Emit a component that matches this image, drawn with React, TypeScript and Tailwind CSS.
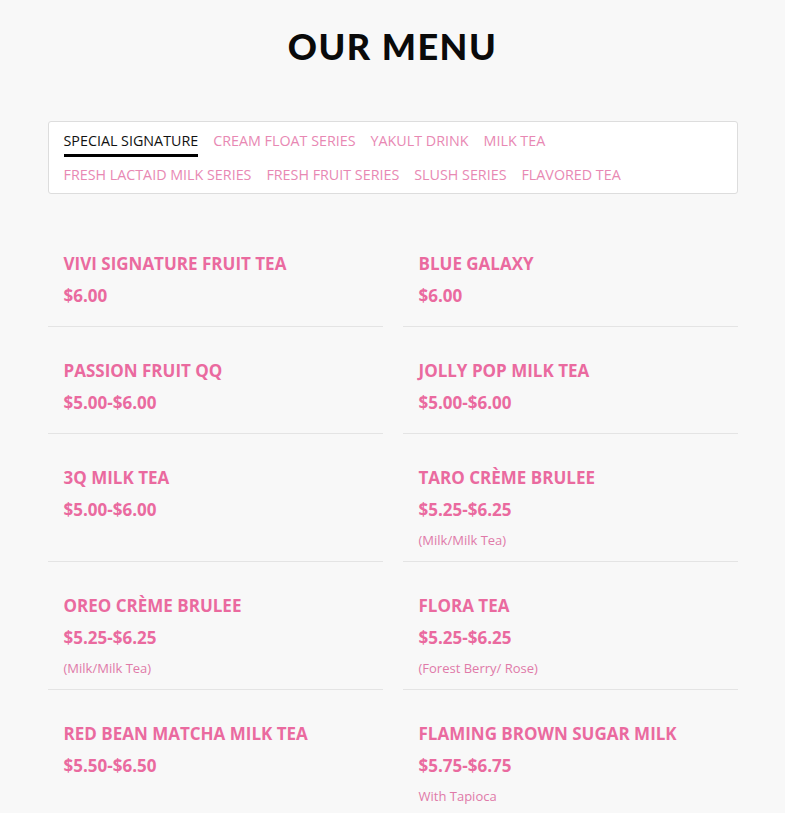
const tabs = [
  ["SPECIAL SIGNATURE", "CREAM FLOAT SERIES", "YAKULT DRINK", "MILK TEA"],
  ["FRESH LACTAID MILK SERIES", "FRESH FRUIT SERIES", "SLUSH SERIES", "FLAVORED TEA"],
];

type Item = { name: string; price: string; note?: string };

const items: Item[] = [
  { name: "VIVI SIGNATURE FRUIT TEA", price: "$6.00" },
  { name: "BLUE GALAXY", price: "$6.00" },
  { name: "PASSION FRUIT QQ", price: "$5.00-$6.00" },
  { name: "JOLLY POP MILK TEA", price: "$5.00-$6.00" },
  { name: "3Q MILK TEA", price: "$5.00-$6.00" },
  { name: "TARO CRÈME BRULEE", price: "$5.25-$6.25", note: "(Milk/Milk Tea)" },
  { name: "OREO CRÈME BRULEE", price: "$5.25-$6.25", note: "(Milk/Milk Tea)" },
  { name: "FLORA TEA", price: "$5.25-$6.25", note: "(Forest Berry/ Rose)" },
  { name: "RED BEAN MATCHA MILK TEA", price: "$5.50-$6.50" },
  { name: "FLAMING BROWN SUGAR MILK", price: "$5.75-$6.75", note: "With Tapioca" },
];

export default function App() {
  return (
    <div className="min-h-screen bg-[#f8f8f8] font-['Open_Sans',sans-serif]">
      <div className="mx-auto w-[690px] pt-[24px]">
        {/* Title */}
        <h1 className="text-center font-['Lato',sans-serif] text-[36px] font-black leading-[44px] tracking-[1.5px] text-[#0a0a0a]">
          OUR MENU
        </h1>

        {/* Tabs */}
        <div className="mt-[53px] rounded-[3px] border border-[#dddddd] bg-white px-[15px] pb-[5px] pt-[6px]">
          {tabs.map((row, r) => (
            <div key={r} className={`flex gap-[15px] ${r === 1 ? "pt-[8px]" : ""}`}>
              {row.map((t) => {
                const active = t === "SPECIAL SIGNATURE";
                return (
                  <span
                    key={t}
                    className={`text-[14.3px] leading-[20px] ${
                      r === 0 ? "pb-[3px] pt-[3px]" : ""
                    } ${
                      active
                        ? "border-b-[3px] border-black text-[#111]"
                        : "border-b-[3px] border-transparent text-[#e888b3]"
                    }`}
                  >
                    {t}
                  </span>
                );
              })}
            </div>
          ))}
        </div>

        {/* Items */}
        <div className="mt-[26px] grid grid-cols-2 gap-x-[20px]">
          {items.map((it) => (
            <div
              key={it.name}
              className="border-b border-[#e4e4e4] pb-[10px] pl-[16px] pr-[15px] pt-[30px]"
            >
              <div className="text-[17px] font-bold leading-[28px] text-[#ea6a9f]">
                {it.name}
              </div>
              <div className="mt-[4px] text-[17px] font-bold leading-[28px] text-[#ea6a9f]">
                {it.price}
              </div>
              {it.note ? (
                <div className="mt-[5px] text-[13px] leading-[22px] text-[#e07aa8]">
                  {it.note}
                </div>
              ) : (
                <div className="h-[6px]" />
              )}
            </div>
          ))}
        </div>
      </div>
    </div>
  );
}
